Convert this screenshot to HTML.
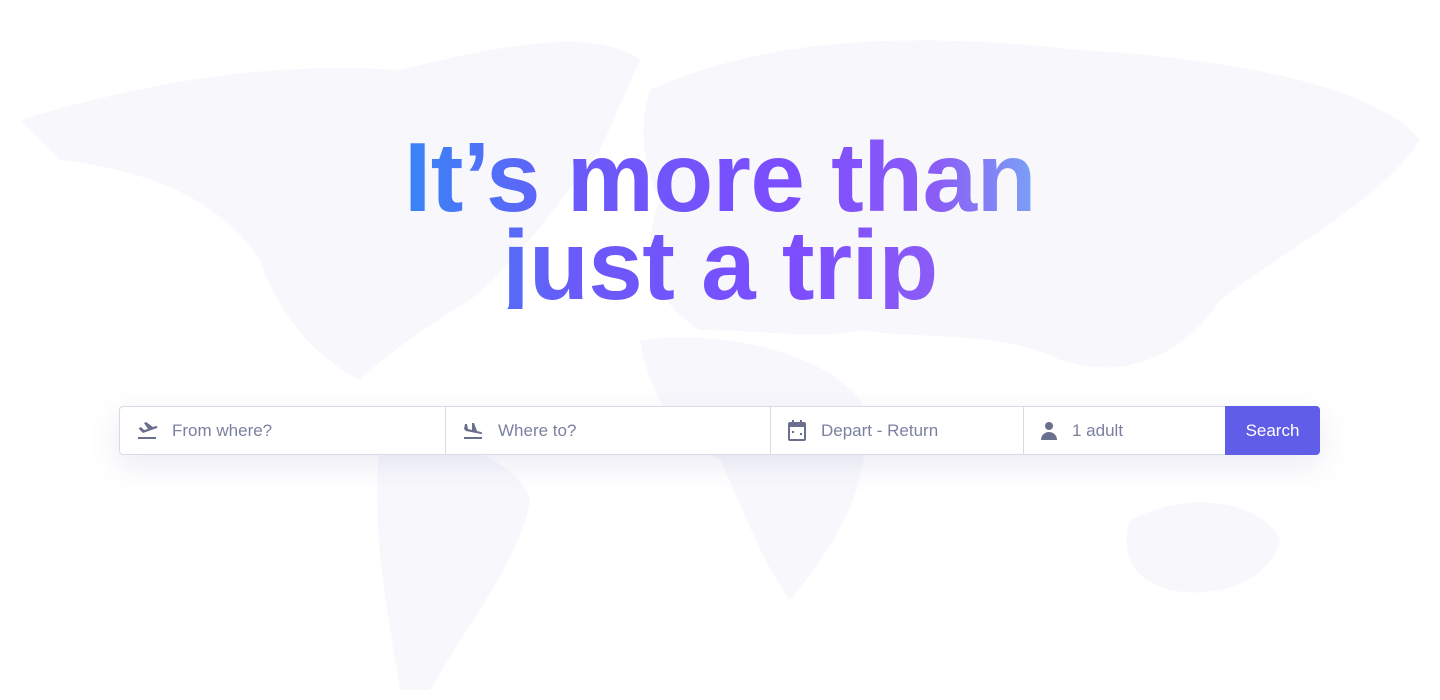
<!DOCTYPE html>
<html><head><meta charset="utf-8"><style>
html,body{margin:0;width:1440px;height:700px;overflow:hidden;background:#fff;font-family:"Liberation Sans",sans-serif}
.map{position:absolute;inset:0}
h1{position:absolute;left:0;width:1440px;top:133px;margin:0;text-align:center;font-size:98px;line-height:88px;font-weight:700;letter-spacing:-0.5px;
background:linear-gradient(90deg,#3b82f6 29%,#6a5af9 40%,#7c4dff 55%,#8b5cf6 65%,#7aa2f7 72%);-webkit-background-clip:text;background-clip:text;color:transparent}
.bar{position:absolute;left:119px;top:406px;width:1201px;height:49px;background:#fff;border:1px solid #d8dae8;border-radius:4px;box-sizing:border-box;display:flex;box-shadow:0 10px 30px rgba(120,120,180,.15)}
.f{display:flex;align-items:center;border-right:1px solid #d8dae8;box-sizing:border-box;color:#7c80a0;font-size:17px}
.f svg{margin:0 14px 0 16px}
.btn{flex:1;background:#605de8;color:#fff;font-size:17px;display:flex;align-items:center;justify-content:center;border-radius:0 4px 4px 0;margin:-1px -1px -1px 0}
</style></head><body>
<svg class="map" width="1440" height="700">
<g fill="#f8f8fc">
<path d="M20 120 C120 90 250 60 400 70 C520 40 600 30 640 60 L600 150 C560 200 520 260 470 300 C420 330 380 360 360 380 C320 360 280 320 260 260 C220 200 150 170 60 160 Z"/>
<path d="M380 440 C440 430 520 460 530 500 C520 560 470 620 430 690 L400 690 C390 620 370 540 380 440 Z"/>
<path d="M650 90 C760 40 900 30 1080 50 C1250 60 1380 90 1420 140 C1380 200 1300 240 1220 300 C1180 360 1120 380 1060 360 C1000 330 920 340 860 330 C820 340 760 330 700 330 C650 300 640 250 660 200 C640 160 640 120 650 90 Z"/>
<path d="M640 340 C720 330 820 350 860 400 C880 470 840 540 790 600 C760 560 740 500 720 460 C680 440 650 400 640 340 Z"/>
<path d="M1130 520 C1190 490 1260 500 1280 540 C1270 580 1220 600 1170 590 C1130 580 1120 550 1130 520 Z"/>
</g></svg>
<h1>It’s more than<br>just a trip</h1>
<div class="bar">
<div class="f" style="width:326px"><svg width="22" height="18" viewBox="0 0 22 18"><path d="M2 16h18" stroke="#6b6f8e" stroke-width="2"/><path d="M3 6l2-1 3 3 4-1-4-6 2-1 7 5 3-1c1 0 2 1 1 2l-14 5-4-4z" fill="#6b6f8e"/></svg>From where?</div>
<div class="f" style="width:325px"><svg width="22" height="18" viewBox="0 0 22 18"><path d="M2 16h18" stroke="#6b6f8e" stroke-width="2"/><path d="M3 2h2l1 5 4 1 0-7h2l3 8 4 1c1 0 2 2 0 2l-15-3-2-2z" fill="#6b6f8e"/></svg>Where to?</div>
<div class="f" style="width:253px"><svg width="20" height="22" viewBox="0 0 20 22"><rect x="2" y="3" width="16" height="17" rx="1" fill="none" stroke="#6b6f8e" stroke-width="2"/><rect x="2" y="3" width="16" height="4" fill="#6b6f8e"/><rect x="5" y="0" width="2" height="4" fill="#6b6f8e"/><rect x="13" y="0" width="2" height="4" fill="#6b6f8e"/><rect x="5" y="11" width="2" height="2" fill="#6b6f8e"/><rect x="13" y="13" width="2" height="2" fill="#6b6f8e"/></svg>Depart - Return</div>
<div class="f" style="width:201px;border-right:0"><svg width="18" height="20" viewBox="0 0 18 20"><circle cx="9" cy="5" r="4" fill="#6b6f8e"/><path d="M1 19c0-5 4-8 8-8s8 3 8 8z" fill="#6b6f8e"/></svg>1 adult</div>
<div class="btn">Search</div>
</div>
</body></html>
